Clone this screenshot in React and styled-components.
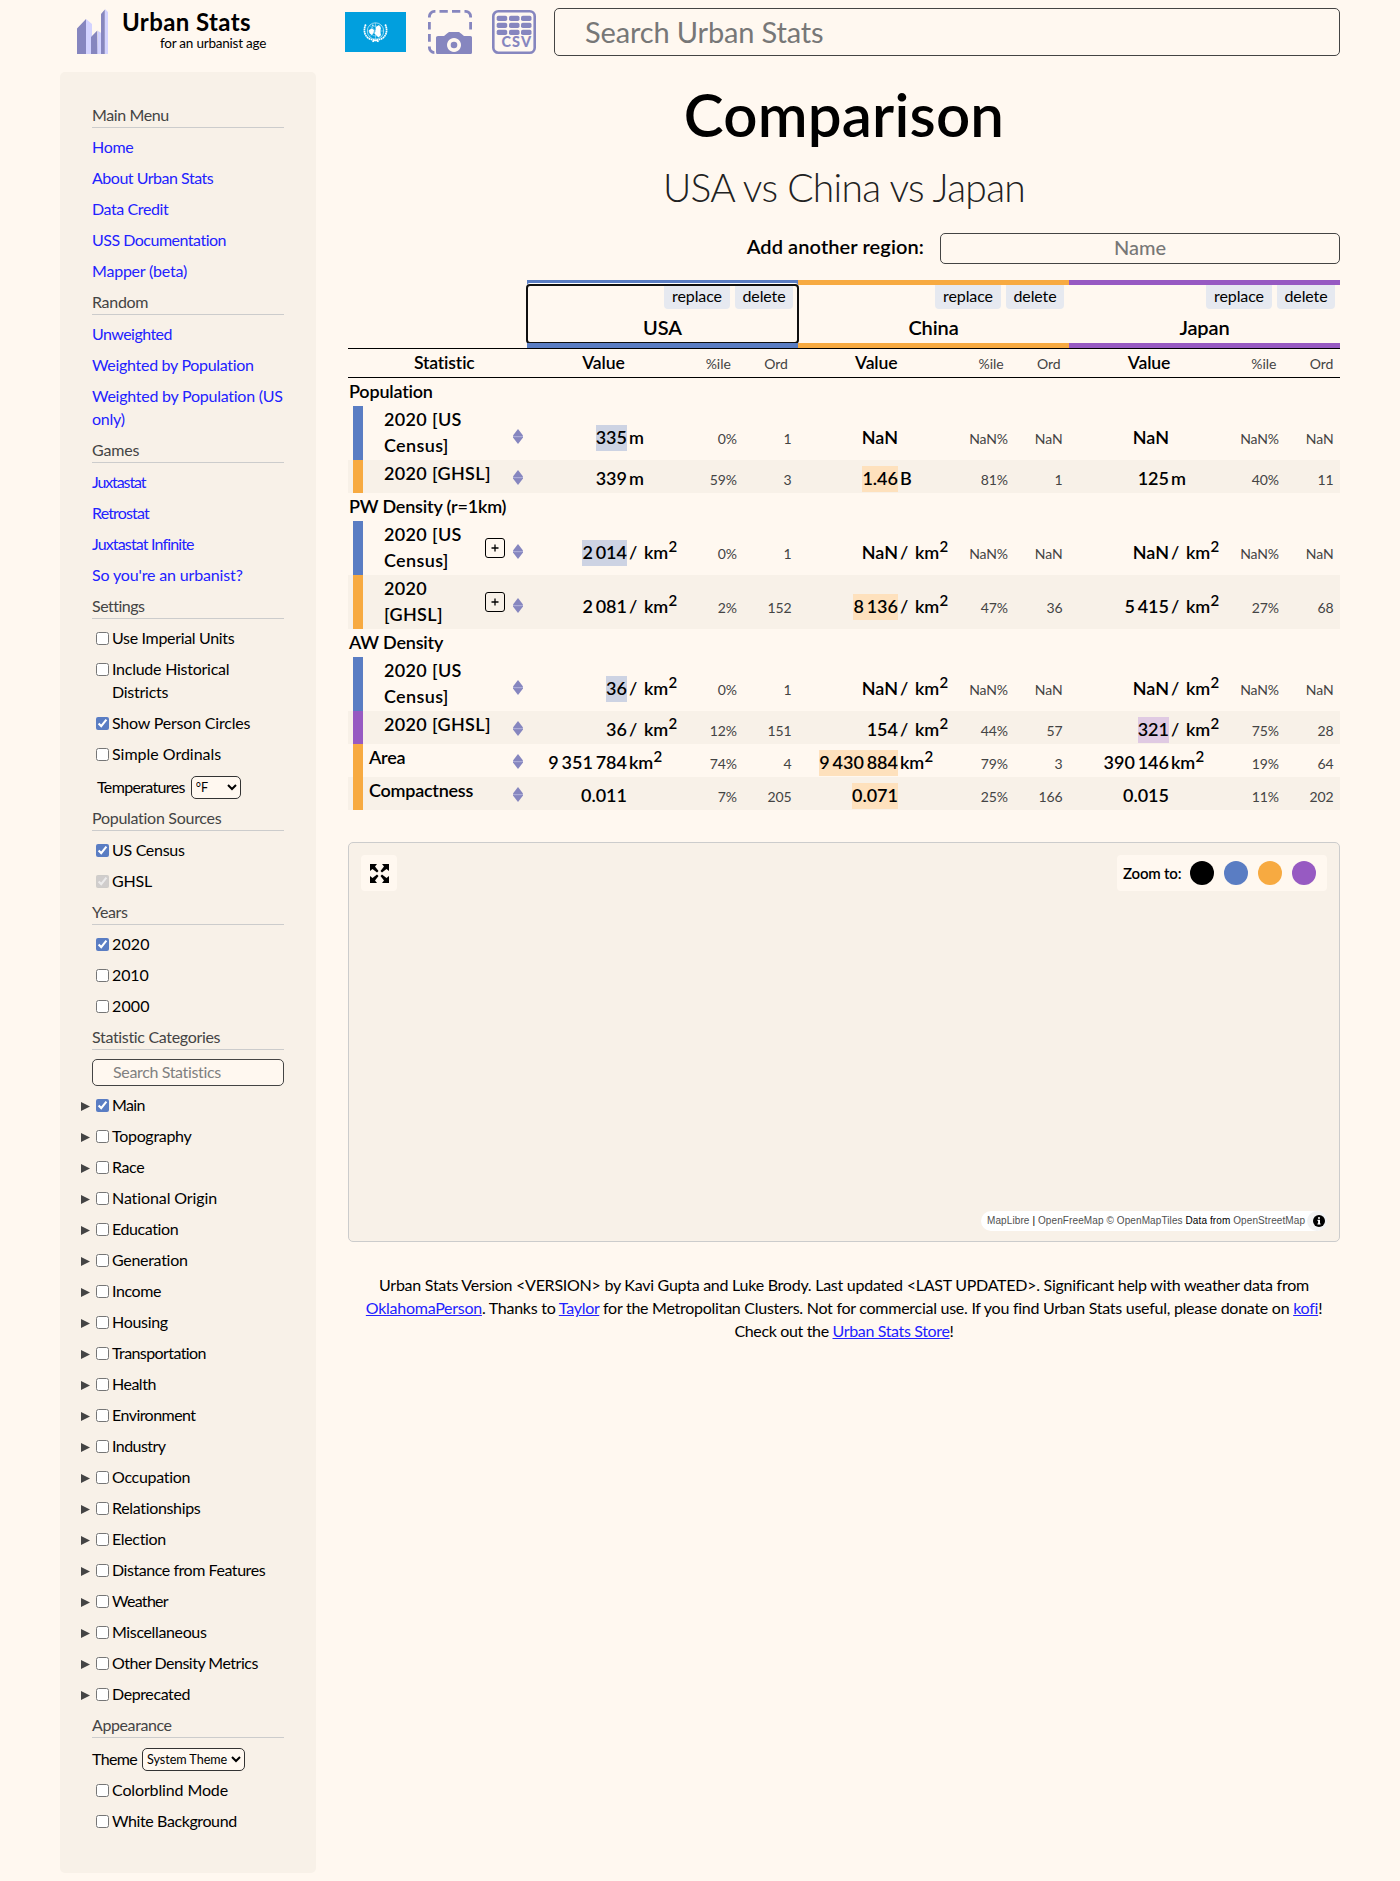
import React from 'react';
import styled, { createGlobalStyle } from 'styled-components';

const c = {
  page: '#fff8f0', panel: '#f8f1e8', blue: '#5a7dc3', orange: '#f7aa41', purple: '#975ac2',
  icon: '#8686bf', iconLight: '#d3d3ff', link: '#2222ff', muted: '#444444', rule: '#cccccc',
};
const tint = { blue: '#cdd3e3', orange: '#fee1bd', purple: '#e0cae3' };

const Global = createGlobalStyle`
  *, *::before, *::after { box-sizing: border-box; }
  body { margin: 0; background: ${c.page}; color: #000; font: 400 16px/23px Lato, "Open Sans", sans-serif; }
  input, select, button { font-family: inherit; }
`;

const Page = styled.div`width: 1400px; height: 1881px; padding: 0 60px; overflow: hidden;`;
const Header = styled.header`display: flex; height: 72px; align-items: flex-start;`;
const Brand = styled.div`display: flex; width: 285px; padding: 9px 0 0 16px;`;
const BrandText = styled.div`padding-left: 13px; display: flex; flex-direction: column; white-space: nowrap;`;
const BrandName = styled.div`font-size: 24px; line-height: 26px; font-weight: 700; letter-spacing: 0.4px;`;
const Tagline = styled.div`font-size: 13.5px; line-height: 16px; padding-left: 38px; letter-spacing: -0.22px;`;
const Tools = styled.div`display: flex; align-items: flex-start; padding-top: 10px; width: 209px;`;
const Flag = styled.svg`margin: 2px 22px 0 0; flex: none;`;
const ToolIcon = styled.svg`margin-right: 20px; flex: none;`;
const SearchBox = styled.input`
  width: 786px; height: 48px; margin-top: 8px; padding: 0 0 2px 30px;
  border: 1px solid #444; border-radius: 5px; background: ${c.page}; font-size: 29px; letter-spacing: -0.15px;
  &::placeholder { color: #777; opacity: 1; }
`;

const Body = styled.div`display: flex; align-items: flex-start; gap: 32px;`;
const Sidebar = styled.nav`width: 256px; height: 1801px; padding: 31px 32px 32px; background: ${c.panel}; border-radius: 5px;`;
const Section = styled.section`display: flex; flex-direction: column; gap: 8px; padding-bottom: 8px;`;
const SectionTitle = styled.h3`margin: 0; padding-bottom: 1px; font-size: 16px; font-weight: 400; line-height: 23px; color: ${c.muted}; border-bottom: 1px solid ${c.rule}; letter-spacing: ${p => p.$track}px; margin-bottom: -1px;`;
const MenuLink = styled.a`color: ${c.link}; letter-spacing: ${p => p.$track}px; white-space: pre-line;`;
const CheckRow = styled.label`display: flex; align-items: flex-start; letter-spacing: ${p => p.$track}px; position: relative; white-space: pre-line;`;
const Check = styled.input`width: 13px; height: 13px; margin: 5.5px 3px 0 4px; accent-color: ${c.blue}; flex: none;`;
const Expander = styled.svg`position: absolute; left: -11px; top: 9px;`;
const SelectRow = styled.div`display: flex; align-items: flex-start; height: 25px; padding: 2px 0 0 ${p => p.$indent || 0}px; letter-spacing: -0.65px;`;
const Select = styled.select`
  width: ${p => p.$w}px; height: 23px; margin: 1px 0 0 ${p => p.$gap}px; border: 1px solid #333; border-radius: 5px; background: ${c.page};
  color: #000; font-size: 12.6px; letter-spacing: -0.05px; padding: 0;
`;
const StatSearch = styled.input`
  width: 192px; height: 27px; margin: 2px 0 -1px; padding: 0 0 2px 20px; border: 1px solid #444; border-radius: 5px;
  background: ${c.page}; font-size: 16px; letter-spacing: -0.35px;
  &::placeholder { color: #808080; opacity: 1; }
`;

const Main = styled.main`width: 992px;`;
const Title = styled.h1`margin: 0; padding-top: 2px; text-align: center; font-size: 60px; line-height: 80px; font-weight: 600; letter-spacing: 0.2px;`;
const Subtitle = styled.h2`margin: 0; padding-top: 8px; text-align: center; font-size: 39px; line-height: 50px; font-weight: 300; letter-spacing: -0.7px; color: #222;`;
const AddRow = styled.div`display: flex; justify-content: flex-end; align-items: center; gap: 16px; margin-top: 21px; height: 31px; font-size: 20px;`;
const AddLabel = styled.label`padding-bottom: 4px; font-weight: 600; letter-spacing: 0.1px;`;
const AddInput = styled.input`
  width: 400px; height: 31px; border: 1px solid #444; border-radius: 5px; background: ${c.page};
  text-align: center; font-size: 20px; font-weight: 500; padding: 0 0 3px;
  &::placeholder { color: #777; opacity: 1; }
`;

const RegionHeads = styled.div`display: grid; grid-template-columns: 179px repeat(3, 271px); margin-top: 16px; border-bottom: 1px solid #000;`;
const RegionHead = styled.div`grid-column: ${p => p.$col}; background: ${p => c[p.$color]}; padding: 5px 0;`;
const RegionBox = styled.div`
  height: 58px; padding-right: 5px; background: ${c.page};
  ${p => p.$focused && `outline: 2px solid #101010; outline-offset: -1px; border-radius: 3px; box-shadow: 0 -2px 0 #fff; clip-path: inset(-2px -1px 0 -1px);`}
`;
const Actions = styled.div`display: flex; justify-content: flex-end; gap: 5px;`;
const Action = styled.button`width: ${p => p.$w}px; height: 24px; padding: 0 0 2px; border: 0; border-radius: 0 0 4px 4px; background: #e6e9f0; font-size: 16px; line-height: 22px; letter-spacing: -0.1px;`;
const RegionName = styled.div`padding: 6px 0 0 5px; text-align: center; font-size: 20px; line-height: 24px; font-weight: 600; letter-spacing: -0.1px;`;

const ColumnHeads = styled.div`
  display: grid; grid-template-columns: 173.6px repeat(3, 163.7px 66px 43.1px); height: 29px;
  align-items: baseline; line-height: 27px; border-bottom: 1px solid #000; text-align: center;
`;
const HeadMain = styled.div`font-size: 17.6px; font-weight: 600; padding-left: ${p => p.$pad || 0}px; letter-spacing: -0.15px;`;
const HeadMinor = styled.div`font-size: 14px; color: ${c.muted}; text-align: ${p => p.$end ? 'right' : 'center'}; padding-right: ${p => p.$end ? 6.5 : 0}px;`;
const GroupTitle = styled.div`height: 28px; padding-left: 1px; font-size: 18px; line-height: 26px; font-weight: 600; letter-spacing: -0.2px;`;
const Row = styled.div`display: grid; grid-template-columns: 179px repeat(3, 271px); height: ${p => p.$tall ? 54 : 33}px; background: ${p => p.$shade ? c.panel : 'transparent'};`;
const StatCell = styled.div`display: flex; align-items: flex-start; padding: 0 4px 0 5px;`;
const Swatch = styled.div`width: 10px; height: 100%; background: ${p => c[p.$color]};`;
const Label = styled.div`flex: 1; padding-left: ${p => p.$indent ? 21 : 6}px; font-size: 18px; line-height: 26px; font-weight: 600; white-space: pre; letter-spacing: ${p => p.$indent ? 0.35 : -0.25}px;`;
const Plus = styled.button`width: 20px; height: 20px; margin: 17px 8px 0 0; padding: 0; display: grid; place-items: center; border: 1px solid #000; border-radius: 3px; background: transparent;`;
const Sort = styled.svg`margin-top: ${p => p.$tall ? 22.5 : 9.5}px; flex: none;`;
const ValueCell = styled.div`display: grid; grid-template-columns: 100px 57px 53px 54.5px; align-items: baseline; align-content: start; padding-top: ${p => p.$tall ? 19 : 6}px; text-align: right;`;
const NumWrap = styled.div`display: flex; justify-content: flex-end;`;
const Num = styled.span`height: 26px; font-size: 18px; line-height: 24px; font-weight: 600; background: ${p => p.$mark ? tint[p.$mark] : 'transparent'};`;
const Digits = styled.span`& + & { margin-left: 2.8px; }`;
const Unit = styled.div`padding-left: 2px; text-align: left; font-size: 18px; line-height: 24px; font-weight: 600; white-space: pre; letter-spacing: -0.2px; word-spacing: 2.6px;`;
const Sup = styled.sup`font-size: 15px; line-height: 0; vertical-align: 7px; margin-left: 0.5px;`;
const Minor = styled.div`font-size: 14px; line-height: 24px; color: ${c.muted}; letter-spacing: -0.1px;`;

const MapPanel = styled.div`
  height: 400px; margin-top: 32px; padding: 12px; display: flex; flex-direction: column; justify-content: space-between;
  border: 1px solid ${c.rule}; border-radius: 5px; background: ${c.panel};
`;
const MapBar = styled.div`display: flex; justify-content: space-between;`;
const MapButton = styled.button`width: 36px; height: 36px; padding: 0; display: grid; place-items: center; border: 0; border-radius: 4px; background: ${c.page};`;
const ZoomTo = styled.div`width: 210px; height: 36px; padding: 0 11px 0 6px; display: flex; align-items: center; justify-content: space-between; border-radius: 4px; background: ${c.page}; font-size: 15px; font-weight: 600; letter-spacing: -0.2px;`;
const Dots = styled.div`display: flex; gap: 10px;`;
const Dot = styled.span`width: 24px; height: 24px; border-radius: 50%; background: ${p => p.$color};`;
const Attribution = styled.div`
  align-self: flex-end; display: flex; align-items: center; justify-content: space-between; width: 346px; height: 20px; margin-bottom: -2px; padding: 0 0 0 6px;
  border-radius: 12px; background: #fff; font: 10px/20px "Liberation Sans", Arial, sans-serif; letter-spacing: 0.1px; color: #000; white-space: nowrap;
`;
const Credit = styled.a`color: #505050;`;
const Footer = styled.footer`margin-top: 31px; text-align: center; white-space: nowrap;`;
const FooterLine = styled.div`letter-spacing: ${p => p.$track}px;`;
const FootLink = styled.a`color: ${c.link}; text-decoration: underline;`;

const Logo = () => (
  <svg width="33" height="46" viewBox="0 0 33 46">
    <path fill={c.iconLight} d="M10 10l6 5v30h-6zM22 22l5 3v20h-6zM29 0l3 3v42h-3z" />
    <path fill={c.icon} d="M1 19.5L10 10v35H1zM15 28l6.3-6.5V45H15zM25 5l3.8-4.5V45H25z" />
  </svg>
);

const UnFlag = () => (
  <Flag width="61" height="40" viewBox="0 0 61 40">
    <rect width="61" height="40" fill="#019fde" />
    <g fill="none" stroke="#fff">
      <circle cx="30.5" cy="19" r="8.2" strokeWidth=".6" />
      <circle cx="30.5" cy="19" r="5" strokeWidth=".4" />
      <path strokeWidth=".4" d="M22.3 19h16.4M30.5 11v16M24.8 13.3l11.4 11.4M36.2 13.3L24.8 24.7" />
      <path strokeWidth="1.7" strokeDasharray="1.7 .5" d="M20.8 12.5c-3 6-1 12.6 4.6 14.7 3 1 6 .8 8.4 2.6M40.2 12.5c3 6 1 12.6-4.6 14.7-3 1-6 .8-8.4 2.6" />
    </g>
    <path fill="#fff" d="M24 18l3-1.5 2 1.5-.5 3-2 2-2.2-2zM31 15l3-2 2 3-1 3 1 4-2.5 2.5L31 23l-2-2 2-1.5zM27 12.5l2 .5-1.5 1.5z" />
  </Flag>
);

const CameraIcon = () => (
  <ToolIcon width="44" height="44" viewBox="0 0 44 44">
    <g fill="none" stroke={c.icon} strokeWidth="2.8">
      <path d="M1.4 7.5V6.5a5 5 0 0 1 5-5.1h1M11.5 1.4h8.3M24 1.4h8.3M36.5 1.4h1a5 5 0 0 1 5.1 5v1M1.4 12v7.5M1.4 24v7.8M1.4 36.5v1a5 5 0 0 0 5 5.1M42.6 12v7.5" />
    </g>
    <path fill={c.icon} fillRule="evenodd" d="M10 26h6l3-2.5c1-.9 1.6-1.5 2.8-1.5h8.4c1.2 0 1.8.6 2.8 1.5L36 26h6.5q1.5 0 1.5 1.5v15q0 1.5-1.5 1.5h-33Q8 44 8 42.5v-15Q8 26 10 26zM26 28a7 7 0 1 0 .01 0z" />
    <circle cx="26" cy="35" r="3.3" fill={c.icon} />
  </ToolIcon>
);

const CsvText = styled.text`font: 900 14.4px Lato, sans-serif;`;
const CsvIcon = () => (
  <ToolIcon width="44" height="44" viewBox="0 0 44 44" fill={c.icon}>
    <rect x="1.3" y="1.3" width="41.4" height="41.4" rx="5" fill="none" stroke={c.icon} strokeWidth="2.6" />
    {[5.7, 12.7, 19.7].map(y => [4.7, 17, 29].map(x => <rect key={`${x}-${y}`} x={x} y={y} width="10.5" height="5.3" rx="1.8" />))}
    <CsvText x="9.5" y="37.4" textLength="29.5">CSV</CsvText>
  </ToolIcon>
);

const SortIcon = ({ tall }) => (
  <Sort $tall={tall} width="10" height="15" viewBox="0 0 10 15" fill={c.icon}>
    <path d="M5 0l5 6.500v2L5 15 0 8.500v-2z" />
    <rect y="7" width="10" height="1.200" fill="#ababd6" />
  </Sort>
);

/* Each menu entry is its text and its letter spacing in px. */
const links = [
  ['Main Menu', -0.4, [['Home', -0.3], ['About Urban Stats', -0.48], ['Data Credit', -0.4], ['USS Documentation', -0.5], ['Mapper (beta)', -0.22]]],
  ['Random', -0.3, [['Unweighted', -0.55], ['Weighted by Population', -0.3], ['Weighted by Population (US\nonly)', -0.25]]],
  ['Games', -0.15, [['Juxtastat', -1.1], ['Retrostat', -0.85], ['Juxtastat Infinite', -0.85], ["So you're an urbanist?", -0.15]]],
];
const categories = [['Main', -0.6], ['Topography', -0.3], ['Race', -0.4], ['National Origin', -0.1], ['Education', -0.4],
  ['Generation', -0.3], ['Income', -0.4], ['Housing', -0.3], ['Transportation', -0.6], ['Health', -0.5],
  ['Environment', -0.55], ['Industry', -0.55], ['Occupation', -0.3], ['Relationships', -0.33], ['Election', -0.35],
  ['Distance from Features', -0.45], ['Weather', -0.7], ['Miscellaneous', -0.37], ['Other Density Metrics', -0.5], ['Deprecated', -0.4]];

const Option = ({ label, track = -0.2, checked, disabled, expandable }) => (
  <CheckRow $track={track}>
    {expandable && <Expander width="9" height="9" viewBox="0 0 9 9"><path d="M0 0l9 4.500L0 9z" fill={c.muted} /></Expander>}
    <Check type="checkbox" defaultChecked={checked} disabled={disabled} />
    {label}
  </CheckRow>
);

const Group = ({ title, track, children }) => (
  <Section><SectionTitle $track={track}>{title}</SectionTitle>{children}</Section>
);

const SideMenu = () => (
  <Sidebar>
    {links.map(([title, track, items]) => (
      <Group key={title} title={title} track={track}>
        {items.map(([t, s]) => <MenuLink key={t} $track={s}>{t}</MenuLink>)}
      </Group>
    ))}
    <Group title="Settings" track={-0.5}>
      <Option label="Use Imperial Units" track={-0.33} />
      <Option label={'Include Historical\nDistricts'} track={-0.25} />
      <Option label="Show Person Circles" checked />
      <Option label="Simple Ordinals" track={-0.02} />
      <SelectRow $indent={5}>Temperatures<Select $w={50} $gap={6}><option>°F</option></Select></SelectRow>
    </Group>
    <Group title="Population Sources" track={-0.28}>
      <Option label="US Census" track={-0.3} checked />
      <Option label="GHSL" checked disabled />
    </Group>
    <Group title="Years" track={-0.35}>
      <Option label="2020" track={0.1} checked />
      <Option label="2010" track={-0.1} />
      <Option label="2000" track={0.1} />
    </Group>
    <Group title="Statistic Categories" track={-0.33}>
      <StatSearch placeholder="Search Statistics" />
      {categories.map(([t, s], i) => <Option key={t} label={t} track={s} checked={i === 0} expandable />)}
    </Group>
    <Group title="Appearance" track={-0.4}>
      <SelectRow>Theme<Select $w={103} $gap={5}><option>System Theme</option></Select></SelectRow>
      <Option label="Colorblind Mode" track={-0.13} />
      <Option label="White Background" track={-0.4} />
    </Group>
  </Sidebar>
);

const regions = [['USA', 'blue'], ['China', 'orange'], ['Japan', 'purple']];
const density = '/ km';
const table = [
  { group: 'Population' },
  { label: '2020 [US\nCensus]', best: 0, unit: ['m', '', ''], values: [['335', '0%', '1'], ['NaN', 'NaN%', 'NaN'], ['NaN', 'NaN%', 'NaN']] },
  { label: '2020 [GHSL]', best: 1, shade: true, unit: ['m', 'B', 'm'], values: [['339', '59%', '3'], ['1.46', '81%', '1'], ['125', '40%', '11']] },
  { group: 'PW Density (r=1km)' },
  { label: '2020 [US\nCensus]', best: 0, plus: true, unit: density, values: [['2 014', '0%', '1'], ['NaN', 'NaN%', 'NaN'], ['NaN', 'NaN%', 'NaN']] },
  { label: '2020\n[GHSL]', best: 1, plus: true, shade: true, unit: density, values: [['2 081', '2%', '152'], ['8 136', '47%', '36'], ['5 415', '27%', '68']] },
  { group: 'AW Density' },
  { label: '2020 [US\nCensus]', best: 0, unit: density, values: [['36', '0%', '1'], ['NaN', 'NaN%', 'NaN'], ['NaN', 'NaN%', 'NaN']] },
  { label: '2020 [GHSL]', best: 2, shade: true, unit: density, values: [['36', '12%', '151'], ['154', '44%', '57'], ['321', '75%', '28']] },
  { label: 'Area', flat: true, best: 1, unit: 'km', values: [['9 351 784', '74%', '4'], ['9 430 884', '79%', '3'], ['390 146', '19%', '64']] },
  { label: 'Compactness', flat: true, best: 1, shade: true, unit: ['', '', ''], values: [['0.011', '7%', '205'], ['0.071', '25%', '166'], ['0.015', '11%', '202']] },
];

const StatRow = ({ row }) => {
  const tall = row.label.includes('\n');
  const squared = typeof row.unit === 'string';
  return (
    <Row $tall={tall} $shade={row.shade}>
      <StatCell>
        <Swatch $color={regions[row.best][1]} />
        <Label $indent={!row.flat}>{row.label}</Label>
        {row.plus && <Plus><svg width="8" height="8" viewBox="0 0 8 8"><path d="M4 .5v7M.5 4h7" stroke="#000" strokeWidth="1.3" /></svg></Plus>}
        <SortIcon tall={tall} />
      </StatCell>
      {row.values.map(([num, pct, ord], i) => (
        <ValueCell key={i} $tall={tall}>
          <NumWrap>
            <Num $mark={row.best === i && regions[i][1]}>
              {num.split(' ').map((d, k) => <Digits key={k}>{d}</Digits>)}
            </Num>
          </NumWrap>
          <Unit>{squared ? <>{row.unit}<Sup>2</Sup></> : row.unit[i]}</Unit>
          <Minor>{pct}</Minor>
          <Minor>{ord}</Minor>
        </ValueCell>
      ))}
    </Row>
  );
};

const ComparisonTable = () => (
  <div>
    <RegionHeads>
      {regions.map(([name, color], i) => (
        <RegionHead key={name} $color={color} $col={i + 2}>
          <RegionBox $focused={i === 0}>
            <Actions><Action $w={66}>replace</Action><Action $w={58}>delete</Action></Actions>
            <RegionName>{name}</RegionName>
          </RegionBox>
        </RegionHead>
      ))}
    </RegionHeads>
    <ColumnHeads>
      <HeadMain $pad={19}>Statistic</HeadMain>
      {regions.map(([name]) => (
        <React.Fragment key={name}>
          <HeadMain>Value</HeadMain><HeadMinor>%ile</HeadMinor><HeadMinor $end>Ord</HeadMinor>
        </React.Fragment>
      ))}
    </ColumnHeads>
    {table.map((row, i) => row.group ? <GroupTitle key={i}>{row.group}</GroupTitle> : <StatRow key={i} row={row} />)}
  </div>
);

const MapView = () => (
  <MapPanel>
    <MapBar>
      <MapButton>
        <svg width="19" height="19" viewBox="0 0 19 19">
          <path d="M0 0h7L5 2.500l3.500 4.500L7 8.500 2.500 5 0 7zM19 0v7l-2.500-2L12 8.500 10.500 7 14 2.500 12 0zM0 19v-7l2.500 2L7 10.500 8.500 12 5 16.500 7 19zM19 19h-7l2-2.500-3.500-4.500 1.500-1.500 4.500 3.500 2.500-2z" />
        </svg>
      </MapButton>
      <ZoomTo>Zoom to:
        <Dots>{['#000', c.blue, c.orange, c.purple].map(k => <Dot key={k} $color={k} />)}</Dots>
      </ZoomTo>
    </MapBar>
    <Attribution>
      <span><Credit>MapLibre</Credit> | <Credit>OpenFreeMap</Credit> <Credit>© OpenMapTiles</Credit> Data from <Credit>OpenStreetMap</Credit></span>
      <svg width="20" height="20" viewBox="0 0 20 20">
        <circle cx="10" cy="10" r="10" fill="#f2f2f2" />
        <circle cx="12" cy="10" r="6" />
        <path fill="#fff" d="M11 6.200h2v1.600h-2zM10.500 8.800H13v3.600h.6v1.200h-3.200v-1.200h.7V10h-.6z" />
      </svg>
    </Attribution>
  </MapPanel>
);

export default function App() {
  return (
    <Page>
      <Global />
      <Header>
        <Brand>
          <Logo />
          <BrandText><BrandName>Urban Stats</BrandName><Tagline>for an urbanist age</Tagline></BrandText>
        </Brand>
        <Tools><UnFlag /><CameraIcon /><CsvIcon /></Tools>
        <SearchBox placeholder="Search Urban Stats" />
      </Header>
      <Body>
        <SideMenu />
        <Main>
          <Title>Comparison</Title>
          <Subtitle>USA vs China vs Japan</Subtitle>
          <AddRow><AddLabel>Add another region:</AddLabel><AddInput placeholder="Name" /></AddRow>
          <ComparisonTable />
          <MapView />
          <Footer>
            <FooterLine $track={-0.256}>Urban Stats Version &lt;VERSION&gt; by Kavi Gupta and Luke Brody. Last updated &lt;LAST UPDATED&gt;. Significant help with weather data from</FooterLine>
            <FooterLine $track={-0.265}><FootLink>OklahomaPerson</FootLink>. Thanks to <FootLink>Taylor</FootLink> for the Metropolitan Clusters. Not for commercial use. If you find Urban Stats useful, please donate on <FootLink>kofi</FootLink>!</FooterLine>
            <FooterLine $track={-0.35}>Check out the <FootLink>Urban Stats Store</FootLink>!</FooterLine>
          </Footer>
        </Main>
      </Body>
    </Page>
  );
}
